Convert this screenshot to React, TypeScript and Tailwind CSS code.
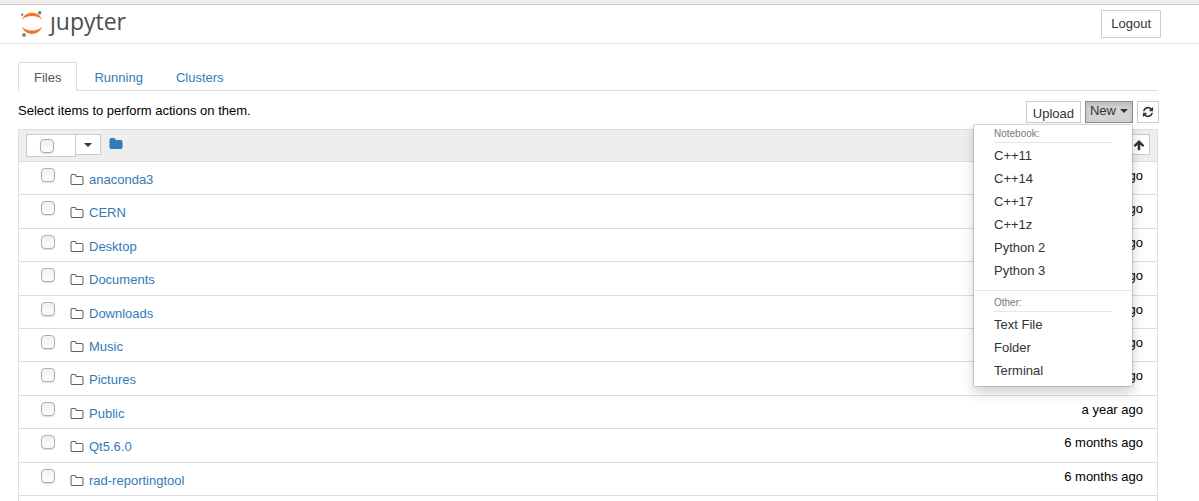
import type { ReactNode } from "react";

interface FileRow {
  name: string;
  modified: string;
}

const files: FileRow[] = [
  { name: "anaconda3", modified: "a year ago" },
  { name: "CERN", modified: "a year ago" },
  { name: "Desktop", modified: "a year ago" },
  { name: "Documents", modified: "a year ago" },
  { name: "Downloads", modified: "a year ago" },
  { name: "Music", modified: "a year ago" },
  { name: "Pictures", modified: "a year ago" },
  { name: "Public", modified: "a year ago" },
  { name: "Qt5.6.0", modified: "6 months ago" },
  { name: "rad-reportingtool", modified: "6 months ago" },
];

const kernels = ["C++11", "C++14", "C++17", "C++1z", "Python 2", "Python 3"];
const others = ["Text File", "Folder", "Terminal"];
const tabs = ["Files", "Running", "Clusters"];

const icons = {
  folder:
    "M1728 608v704q0 92-66 158t-158 66h-1216q-92 0-158-66t-66-158v-960q0-92 66-158t158-66h320q92 0 158 66t66 158v32h672q92 0 158 66t66 158z",
  folderOutline:
    "M1600 1312v-704q0-40-28-68t-68-28h-704q-40 0-68-28t-28-68v-64q0-40-28-68t-68-28h-320q-40 0-68 28t-28 68v960q0 40 28 68t68 28h1216q40 0 68-28t28-68zm128-704v704q0 92-66 158t-158 66h-1216q-92 0-158-66t-66-158v-960q0-92 66-158t158-66h320q92 0 158 66t66 158v32h672q92 0 158 66t66 158z",
  refresh:
    "M1639 1056q0 5-1 7-64 268-268 434.5t-478 166.5q-146 0-282.5-55t-243.5-157l-129 129q-19 19-45 19t-45-19-19-45v-448q0-26 19-45t45-19h448q26 0 45 19t19 45-19 45l-137 137q71 66 161 102t187 36q134 0 250-65t186-179q11-17 53-117 8-23 30-23h192q13 0 22.5 9.5t9.5 22.5zm25-800v448q0 26-19 45t-45 19h-448q-26 0-45-19t-19-45 19-45l138-138q-148-137-349-137-134 0-250 65t-186 179q-11 17-53 117-8 23-30 23h-199q-13 0-22.5-9.5t-9.5-22.5v-7q65-268 270-434.5t480-166.5q146 0 284 55.5t245 156.5l130-129q19-19 45-19t45 19 19 45z",
  arrowUp:
    "M1675 971q0 51-37 90l-75 75q-38 38-91 38-54 0-90-38l-294-293v704q0 52-37.5 84.5t-90.5 32.5h-128q-53 0-90.5-32.5t-37.5-84.5v-704l-294 293q-36 38-90 38t-90-38l-75-75q-38-38-38-90 0-53 38-91l651-651q35-37 90-37 54 0 91 37l651 651q37 39 37 91z",
};

function Icon({ path, className }: { path: string; className: string }) {
  return (
    <svg viewBox="0 0 1792 1792" fill="currentColor" aria-hidden="true" className={className}>
      <path d={path} />
    </svg>
  );
}

function Caret() {
  return (
    <svg viewBox="0 0 8 4" fill="currentColor" aria-hidden="true" className="h-1 w-2">
      <path d="M0 0h8L4 4z" />
    </svg>
  );
}

function Logo() {
  return (
    <svg viewBox="0 0 22 28" aria-hidden="true" className="h-7 w-[22px]">
      <path d="M2 9.600C3.500 5.400 7.300 2.700 12 2.700s8.500 2.700 10 6.900C19.600 7.300 16.200 6.100 12 6.100S4.400 7.300 2 9.600z" fill="#f37726" />
      <path d="M2 17C4.400 19.300 7.800 20.500 12 20.500s7.600-1.200 10-3.500C20.500 21.200 16.700 23.900 12 23.900S3.500 21.200 2 17z" fill="#f37726" />
      <circle cx="19.700" cy="2.700" r="1.700" fill="#767677" />
      <circle cx="2.200" cy="4.600" r="1.200" fill="#767677" />
      <circle cx="4" cy="24.900" r="2" fill="#8c8c8d" />
    </svg>
  );
}

function CheckBox({ label }: { label: string }) {
  return (
    <input
      type="checkbox"
      aria-label={label}
      className="block size-3.5 appearance-none rounded border border-[#adadad] bg-linear-to-b from-[#f0f0f0] to-white shadow-[0_1px_1px_#ddd]"
    />
  );
}

function MenuGroup({ title, items }: { title: string; items: string[] }) {
  return (
    <div>
      <div className="mx-5 mb-px border-b border-[#e5e5e5] text-[10px] leading-[17px] text-[#777]">
        {title}
      </div>
      <ul>
        {items.map((item) => (
          <li key={item}>
            <a href="#" className="block px-5 leading-[23px] text-[#333]">
              {item}
            </a>
          </li>
        ))}
      </ul>
    </div>
  );
}

function ToolButton({
  label,
  className,
  children,
}: {
  label: string;
  className: string;
  children: ReactNode;
}) {
  return (
    <button
      aria-label={label}
      className={`flex items-center justify-center border border-[#ccc] bg-white text-[#333] ${className}`}
    >
      {children}
    </button>
  );
}

export default function App() {
  return (
    <div className="flex h-screen flex-col overflow-hidden bg-white font-['Liberation_Sans',Arial,sans-serif] text-[13px] leading-[18px] text-black">
      <div className="h-[5px] shrink-0 border-b border-[#cbc9c7] bg-[#efeeec]" />
      <header className="flex h-[39px] shrink-0 items-start justify-between border-b border-[#e7e7e7] pr-[38px] pl-5">
        <a href="#" aria-label="jupyter" className="flex gap-2 pt-[5px] text-[#4e4e4e]">
          <Logo />
          <span className="font-['Open_Sans','Noto_Sans',sans-serif] text-[23px] leading-[22px] font-medium">
            ȷupyter
          </span>
        </a>
        <button className="mt-[5px] h-7 border border-[#ccc] bg-white px-[9px] text-[#333]">
          Logout
        </button>
      </header>

      <main className="flex min-h-0 flex-1 flex-col pt-[18px] pr-[41px] pl-[18px]">
        <nav className="flex shrink-0 gap-px border-b border-[#ddd]">
          {tabs.map((tab, idx) => (
            <a
              key={tab}
              href="#"
              className={
                idx === 0
                  ? "-mb-px rounded-t-xs border border-[#ddd] border-b-white bg-white px-[15px] pt-1.5 pb-[3px] text-[#555]"
                  : "border border-transparent px-[15px] pt-1.5 pb-0.5 text-[#337ab7]"
              }
            >
              {tab}
            </a>
          ))}
        </nav>

        <div className="-mr-px flex h-[38px] shrink-0 items-start justify-between pt-2.5">
          <p className="leading-5">Select items to perform actions on them.</p>
          <div className="flex gap-1">
            <ToolButton label="Upload" className="h-[22px] px-1.5 pt-1">
              Upload
            </ToolButton>
            <div className="relative">
              <button
                aria-haspopup="menu"
                aria-expanded="true"
                className="flex h-[22px] items-center gap-1 border border-[#8c8c8c] bg-[#d4d4d4] px-1 pb-0.5 text-[#333] shadow-[inset_0_3px_5px_rgba(0,0,0,0.125)]"
              >
                New
                <Caret />
              </button>
              <div className="absolute top-full right-0 z-10 mt-px w-40 rounded-xs border border-black/15 bg-white bg-clip-padding pb-1 shadow-[0_6px_12px_rgba(0,0,0,0.175)]">
                <MenuGroup title="Notebook:" items={kernels} />
                <hr className="mt-2 mb-[3px] border-[#e5e5e5]" />
                <MenuGroup title="Other:" items={others} />
              </div>
            </div>
            <ToolButton label="Refresh" className="h-[22px] w-[22px]">
              <Icon path={icons.refresh} className="size-3" />
            </ToolButton>
          </div>
        </div>

        <section className="flex-1 border border-b-0 border-[#ddd]">
          <div className="flex h-8 items-start justify-between border-b border-[#ddd] bg-[#eee] px-[7px] pt-1">
            <div className="flex items-start">
              <div className="flex h-[23px] w-[50px] items-center border border-[#ccc] bg-white pl-[13px]">
                <CheckBox label="Select all" />
              </div>
              <ToolButton label="Select by type" className="-ml-px h-[21px] w-[26px]">
                <Caret />
              </ToolButton>
              <a href="#" aria-label="Home folder" className="ml-2 pt-[3px] text-[#337ab7]">
                <Icon path={icons.folder} className="size-3.5" />
              </a>
            </div>
            <ToolButton label="Sort by last modified" className="h-[21px] w-[22px]">
              <Icon path={icons.arrowUp} className="size-3" />
            </ToolButton>
          </div>

          <table className="h-[334px] w-full">
            <tbody>
              {files.map((file) => (
                <tr key={file.name} className="border-b border-[#ddd] align-top">
                  <td className="w-[51px] pt-1.5 pl-[22px]">
                    <CheckBox label={file.name} />
                  </td>
                  <td className="pt-[9px]">
                    <a href="#" className="flex items-center gap-[5px] text-[#337ab7]">
                      <Icon path={icons.folderOutline} className="size-3.5 text-[#5e5e5e]" />
                      {file.name}
                    </a>
                  </td>
                  <td className="pt-[5px] pr-3.5 text-right">{file.modified}</td>
                </tr>
              ))}
            </tbody>
          </table>
        </section>
      </main>
    </div>
  );
}
